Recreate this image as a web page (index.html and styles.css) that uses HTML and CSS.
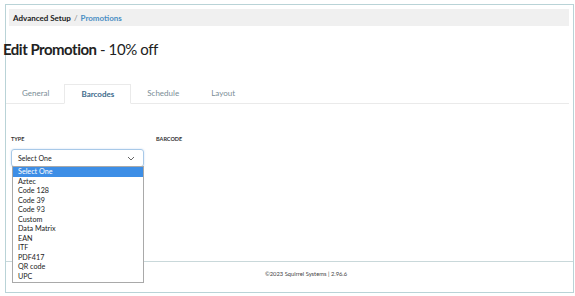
FILE: index.html
```html
<!DOCTYPE html>
<html lang="en">
<head>
<meta charset="UTF-8">
<title>Edit Promotion</title>
<link rel="stylesheet" href="styles.css">
</head>
<body>

<div class="frame">
    <div class="breadcrumb">
        <span class="crumb">Advanced Setup</span>
        <span class="sep">/</span>
        <span class="crumb-current">Promotions</span>
    </div>

    <h1 class="title"><b>Edit Promotion</b> - 10% off</h1>

    <div class="tabs">
        <div class="tab">General</div>
        <div class="tab active">Barcodes</div>
        <div class="tab">Schedule</div>
        <div class="tab">Layout</div>
    </div>

    <div class="panel">
        <div class="field type-field">
            <div class="label">TYPE</div>
            <div class="select">
                <span>Select One</span>
                <svg class="chevron" width="8" height="5" viewBox="0 0 8 5"><path d="M1 1 L4 4 L7 1" fill="none" stroke="#666" stroke-width="1"/></svg>
            </div>
            <ul class="options">
                <li class="selected">Select One</li>
                <li>Aztec</li>
                <li>Code 128</li>
                <li>Code 39</li>
                <li>Code 93</li>
                <li>Custom</li>
                <li>Data Matrix</li>
                <li>EAN</li>
                <li>ITF</li>
                <li>PDF417</li>
                <li>QR code</li>
                <li>UPC</li>
            </ul>
        </div>
        <div class="field">
            <div class="label">BARCODE</div>
        </div>
    </div>

    <div class="footer">&copy;2023 Squirrel Systems | 2.96.6</div>
</div>

</body>
</html>
```

FILE: styles.css
```css
body {
    margin: 0;
    padding: 0;
    background: #fff;
    font-family: Lato, "Open Sans", sans-serif;
    color: #222;
}
.frame {
    margin: 4px 0 0 5px;
    width: 567px;
    height: 287px;
    border: 1px solid #b9d3d7;
    display: flex;
    flex-direction: column;
}
.breadcrumb {
    margin: 4px 4px 0 3px;
    height: 17px;
    background: #f0f0f0;
    display: flex;
    align-items: center;
    gap: 3px;
    padding-left: 4px;
    font-size: 8px;
}
.crumb {
    font-weight: bold;
    color: #222;
}
.sep {
    color: #888;
}
.crumb-current {
    font-weight: bold;
    color: #4a8fc4;
}
.title {
    margin: 13px 0 0 -3px;
    font-size: 15px;
    letter-spacing: -0.4px;
    font-weight: normal;
    line-height: 20px;
}
.title b {
    letter-spacing: -0.5px;
}
.tabs {
    margin: 25px 4px 0 0;
    height: 19px;
    display: flex;
    border-bottom: 1px solid #eaeaea;
    padding-left: 0;
}
.tab {
    padding: 0 16px;
    font-size: 8px;
    line-height: 19px;
    color: #7a8d96;
}
.tab.active {
    margin-left: -1px;
    border: 1px solid #eaeaea;
    border-bottom: 1px solid #fff;
    margin-bottom: -1px;
    line-height: 18px;
    color: #3e6b8c;
    font-weight: bold;
}
.panel {
    flex: 1;
    display: flex;
    padding: 32px 0 0 5px;
    gap: 12px;
}
.field {
    width: 133px;
    position: relative;
}
.label {
    font-size: 5.5px;
    font-weight: bold;
    color: #333;
    height: 10px;
}
.select {
    margin-top: 3px;
    height: 16px;
    border: 1px solid #a8c9e8;
    border-radius: 3px;
    box-shadow: 0 0 2px rgba(90, 150, 220, 0.35);
    display: flex;
    align-items: center;
    justify-content: space-between;
    padding: 0 8px 0 6px;
    font-size: 7px;
    color: #222;
}
.options {
    position: absolute;
    top: 30px;
    left: 0;
    width: 130px;
    margin: 0 0 0 1px;
    padding: 0;
    list-style: none;
    background: #fff;
    border: 1px solid #a9a9a9;
    font-size: 7.2px;
    z-index: 2;
}
.options li {
    height: 9.55px;
    line-height: 9.55px;
    padding-left: 5px;
    color: #222;
}
.options li.selected {
    background: #3d8ee6;
    color: #fff;
}
.footer {
    height: 30px;
    border-top: 1px solid #c9d8da;
    text-align: center;
    font-size: 5.8px;
    line-height: 23px;
    padding-left: 33px;
    color: #444;
}
```
